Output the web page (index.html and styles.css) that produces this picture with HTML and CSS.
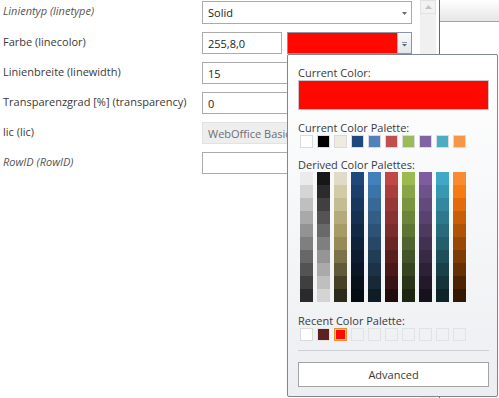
FILE: index.html
```html
<!DOCTYPE html>
<html>
<head>
<meta charset="utf-8">
<link rel="stylesheet" href="styles.css">
</head>
<body>
<div class="page">
  <div class="form-area">
    <div class="form">
      <div class="lbl it">Linientyp (linetype)</div>
      <div class="field select tall"><span>Solid</span><svg class="caret" width="5" height="3" viewBox="0 0 5 3"><path d="M0 0H5L2.5 3Z" fill="#6a6a6a"/></svg></div>

      <div class="lbl">Farbe (linecolor)</div>
      <div class="field-row">
        <div class="field txt short">255,8,0</div>
        <div class="colorpick">
          <div class="cp-red"></div>
          <div class="cp-btn"><svg width="5" height="5" viewBox="0 0 5 5"><rect x="0" y="0" width="5" height="1" fill="#8a95a3"/><path d="M0 2H5L2.5 4.5Z" fill="#5d6773"/></svg></div>
        </div>
      </div>

      <div class="lbl">Linienbreite (linewidth)</div>
      <div class="field txt">15</div>

      <div class="lbl">Transparenzgrad [%] (transparency)</div>
      <div class="field txt">0</div>

      <div class="lbl">lic (lic)</div>
      <div class="field txt disabled">WebOffice Basic</div>

      <div class="lbl it">RowID (RowID)</div>
      <div class="field txt"></div>
    </div>
  </div>
  <div class="scrollbar">
    <div class="sb-up"><svg width="7" height="4" viewBox="0 0 7 4"><path d="M0 4H7L3.5 0Z" fill="#c2c2c2"/></svg></div>
  </div>
  <div class="pane">
    <div class="pane-head"></div>
  </div>
</div>

<div class="popup">
  <div class="p-label">Current Color:</div>
  <div class="current-box"></div>

  <div class="p-label gap10">Current Color Palette:</div>
  <div class="swatches">
    <span class="sw c-white"></span>
    <span class="sw c-black"></span>
    <span class="sw c-tan"></span>
    <span class="sw c-navy"></span>
    <span class="sw c-blue"></span>
    <span class="sw c-red"></span>
    <span class="sw c-green"></span>
    <span class="sw c-purple"></span>
    <span class="sw c-teal"></span>
    <span class="sw c-orange"></span>
  </div>

  <div class="p-label gap9">Derived Color Palettes:</div>
  <div class="derived">
    <span class="col d1"></span>
    <span class="col d2"></span>
    <span class="col d3"></span>
    <span class="col d4"></span>
    <span class="col d5"></span>
    <span class="col d6"></span>
    <span class="col d7"></span>
    <span class="col d8"></span>
    <span class="col d9"></span>
    <span class="col d10"></span>
  </div>

  <div class="p-label gap11">Recent Color Palette:</div>
  <div class="swatches">
    <span class="sw c-white"></span>
    <span class="sw c-maroon"></span>
    <span class="sw c-sel"></span>
    <span class="sw empty"></span>
    <span class="sw empty"></span>
    <span class="sw empty"></span>
    <span class="sw empty"></span>
    <span class="sw empty"></span>
    <span class="sw empty"></span>
    <span class="sw empty"></span>
  </div>

  <div class="sep"></div>
  <div class="adv-btn">Advanced</div>
</div>
</body>
</html>
```

FILE: styles.css
```css
html, body {
  margin: 0;
  padding: 0;
  background: #ffffff;
}
body {
  width: 499px;
  height: 398px;
  overflow: hidden;
  position: relative;
  font-family: "Open Sans", "Noto Sans", sans-serif;
  font-size: 11px;
  color: #333333;
}
.page {
  display: flex;
  height: 398px;
}
.form-area {
  width: 420px;
  flex: none;
}
.form {
  display: grid;
  grid-template-columns: 199px 210px;
  row-gap: 8px;
  align-items: center;
  padding: 1px 0 0 3px;
}
.lbl {
  color: #3a3a3a;
  line-height: 15px;
  white-space: nowrap;
  margin-bottom: 4px;
}
.lbl.it {
  font-style: italic;
  color: #555555;
}
.field {
  box-sizing: border-box;
  height: 22px;
  border: 1px solid #ababab;
  background: #ffffff;
  display: flex;
  align-items: center;
  padding: 0 4px 0 5px;
  color: #222222;
  white-space: nowrap;
  overflow: hidden;
}
.field.tall {
  height: 23px;
}
.select {
  justify-content: space-between;
}
.caret {
  margin-top: 1px;
}
.field-row {
  display: flex;
  gap: 5px;
}
.field.short {
  width: 80px;
  flex: none;
}
.field.disabled {
  background: #eeeeee;
  border-color: #e2e2e2;
  color: #6e6e6e;
}
.colorpick {
  box-sizing: border-box;
  width: 125px;
  height: 22px;
  border: 1px solid #8a96a6;
  display: flex;
}
.cp-red {
  flex: 1;
  background: #ff0800;
}
.cp-btn {
  width: 14px;
  border-left: 1px solid #b4bcc7;
  background: linear-gradient(#fbfbfc, #e2e5e9);
  display: flex;
  align-items: center;
  justify-content: center;
  padding-top: 2px;
  box-sizing: border-box;
}
.scrollbar {
  width: 16px;
  flex: none;
  background: #f0f0f0;
  margin-right: 3px;
}
.sb-up {
  box-sizing: border-box;
  height: 14px;
  border: 1px solid #e2e2e2;
  background: #f2f2f2;
  display: flex;
  align-items: center;
  justify-content: center;
}
.pane {
  flex: 1;
  border-left: 1px solid #2f74c0;
}
.pane-head {
  height: 21px;
  border-bottom: 1px solid #a3a3a3;
  background: linear-gradient(#ffffff, #e6e6e6);
}

/* popup */
.popup {
  position: absolute;
  left: 287px;
  top: 54px;
  width: 211px;
  height: 343px;
  box-sizing: border-box;
  border: 1px solid #7b8796;
  border-radius: 2px;
  background: linear-gradient(#ffffff, #eceef1);
  padding: 10px 9px 0 10px;
}
.p-label {
  line-height: 15px;
  height: 15px;
  color: #3a3a3a;
  white-space: nowrap;
}
.gap10 { margin-top: 10px; }
.gap9 { margin-top: 9px; }
.gap11 { margin-top: 11px; }
.current-box {
  box-sizing: border-box;
  width: 191px;
  height: 30px;
  border: 1px solid #c6c6c6;
  background: #ff0800;
}
.swatches {
  display: flex;
  gap: 4px;
  margin-left: 2px;
  height: 13px;
}
.sw {
  box-sizing: border-box;
  width: 13px;
  height: 13px;
  border: 1px solid #dadada;
}
.c-white { background: #ffffff; }
.c-black { background: #000000; }
.c-tan { background: #eeece1; }
.c-navy { background: #1f497d; }
.c-blue { background: #4f81bd; }
.c-red { background: #c0504d; }
.c-green { background: #9bbb59; }
.c-purple { background: #8064a2; }
.c-teal { background: #4bacc6; }
.c-orange { background: #f79646; }
.c-maroon { background: #5e2121; border-color: #e4e4e4; }
.c-sel {
  background: #ff0800;
  border-color: #ea8f2c;
  box-shadow: inset 0 0 0 1px #ffc46a;
}
.sw.empty {
  background: transparent;
  border-color: #e0e3e6;
}
.derived {
  display: flex;
  gap: 4px;
  margin-left: 2px;
}
.col {
  width: 13px;
  height: 130px;
}
.d1 { background: linear-gradient(#ebebeb 0 13px, #d5d5d5 13px 26px, #bfbfbf 26px 39px, #a9a9a9 39px 52px, #939393 52px 65px, #7f7f7f 65px 78px, #676767 78px 91px, #535353 91px 104px, #3f3f3f 104px 117px, #2a2a2a 117px 130px); }
.d2 { background: linear-gradient(#171717 0 13px, #2b2b2b 13px 26px, #404040 26px 39px, #545454 39px 52px, #696969 52px 65px, #7f7f7f 65px 78px, #959595 78px 91px, #aaaaaa 91px 104px, #bfbfbf 104px 117px, #d4d4d4 117px 130px); }
.d3 { background: linear-gradient(#e0dbc6 0 13px, #d1cba8 13px 26px, #c4bc93 26px 39px, #b4aa7b 39px 52px, #a69c66 52px 65px, #958a58 65px 78px, #7b7249 78px 91px, #5f5a39 91px 104px, #464029 104px 117px, #2d2a1b 117px 130px); }
.d4 { background: linear-gradient(#1f477b 0 13px, #1b3f6d 13px 26px, #18375f 26px 39px, #153051 39px 52px, #122945 52px 65px, #0f223a 65px 78px, #0d1c30 78px 91px, #0b1626 91px 104px, #08111c 104px 117px, #060c14 117px 130px); }
.d5 { background: linear-gradient(#4480bb 0 13px, #3d74a8 13px 26px, #386996 26px 39px, #325e86 39px 52px, #2c5375 52px 65px, #264866 65px 78px, #203d56 78px 91px, #1c3246 91px 104px, #172837 104px 117px, #0f1b25 117px 130px); }
.d6 { background: linear-gradient(#bf4846 0 13px, #a93e3d 13px 26px, #983737 26px 39px, #893232 39px 52px, #7b2c2c 52px 65px, #6a2424 65px 78px, #591e1e 78px 91px, #4a1818 91px 104px, #391313 104px 117px, #210c0b 117px 130px); }
.d7 { background: linear-gradient(#9bbb50 0 13px, #88a647 13px 26px, #7a9540 26px 39px, #6c853a 39px 52px, #5f7533 52px 65px, #506330 65px 78px, #445428 78px 91px, #374420 91px 104px, #2a3518 104px 117px, #1e2610 117px 130px); }
.d8 { background: linear-gradient(#7e5c9f 0 13px, #6e528b 13px 26px, #624a7c 26px 39px, #58426f 39px 52px, #4d3a60 52px 65px, #423252 65px 78px, #382a45 78px 91px, #2d2138 91px 104px, #22192b 104px 117px, #17111e 117px 130px); }
.d9 { background: linear-gradient(#41a7c6 0 13px, #3897b1 13px 26px, #33879e 26px 39px, #2e788d 39px 52px, #296b7c 52px 65px, #245d6b 65px 78px, #1e4f5b 78px 91px, #1a414a 91px 104px, #153338 104px 117px, #0f2428 117px 130px); }
.d10 { background: linear-gradient(#f88a32 0 13px, #f57b14 13px 26px, #e26c0b 26px 39px, #c85f08 39px 52px, #b05306 52px 65px, #974805 65px 78px, #7e3c05 78px 91px, #653004 91px 104px, #4d2403 104px 117px, #341802 117px 130px); }
.sep {
  margin-top: 9px;
  width: 191px;
  height: 1px;
  background: #cdd0d4;
}
.adv-btn {
  margin-top: 11px;
  box-sizing: border-box;
  width: 191px;
  height: 25px;
  border: 1px solid #a3a3a3;
  background: #ffffff;
  text-align: center;
  line-height: 23px;
  color: #3a3a3a;
}
```
